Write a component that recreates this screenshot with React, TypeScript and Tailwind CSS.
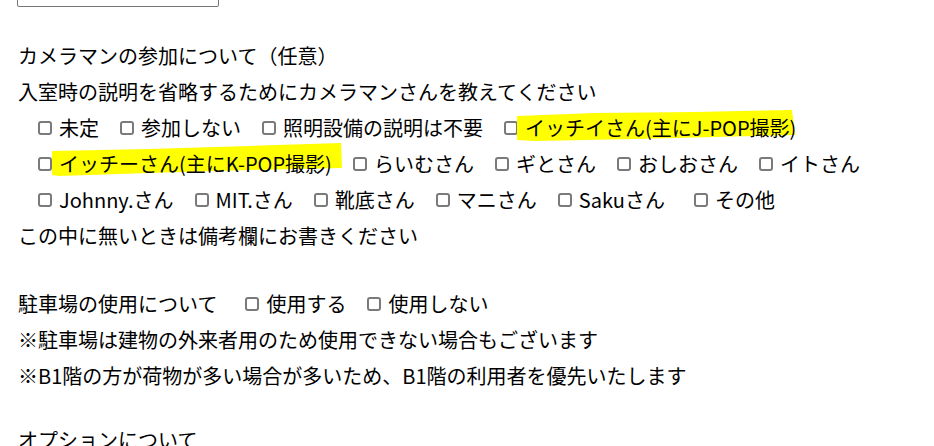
import React from "react";

type Item = { label: string; mark?: "j" | "k"; wide?: boolean };

const rows: Item[][] = [
  [
    { label: "未定" },
    { label: "参加しない" },
    { label: "照明設備の説明は不要" },
    { label: "イッチイさん(主にJ-POP撮影)", mark: "j" },
  ],
  [
    { label: "イッチーさん(主にK-POP撮影)", mark: "k" },
    { label: "らいむさん" },
    { label: "ギとさん" },
    { label: "おしおさん" },
    { label: "イトさん" },
  ],
  [
    { label: "Johnny.さん" },
    { label: "MIT.さん" },
    { label: "靴底さん" },
    { label: "マニさん" },
    { label: "Sakuさん", wide: true },
    { label: "その他" },
  ],
];

const Marker = ({ kind }: { kind: "j" | "k" }) =>
  kind === "j" ? (
    <svg
      className="absolute left-[-8px] top-[-2px] -z-10"
      width="282"
      height="36"
      viewBox="0 0 282 36"
    >
      <polygon
        fill="#ffff00"
        points="0,8 78,5 178,4 275,2 278,27 198,29 118,31 18,33 0,32"
      />
    </svg>
  ) : (
    <svg
      className="absolute left-[-7px] top-[-5px] -z-10"
      width="292"
      height="37"
      viewBox="0 0 292 37"
    >
      <polygon
        fill="#ffff00"
        points="0,10 97,8 197,5 289,2 290,27 197,29 97,32 7,35 0,34"
      />
    </svg>
  );

const Check = ({ label, mark, wide }: Item) => (
  <label className={`inline-flex items-center shrink-0 ${wide ? "mr-[29px]" : "mr-[21px]"}`}>
    <input type="checkbox" className="sr-only" />
    <span className="block shrink-0 w-[14px] h-[14px] border-2 border-[#7a7a7a] rounded-[3px] bg-white" />
    <span className="relative isolate ml-[7px]">
      {mark && <Marker kind={mark} />}
      {label}
    </span>
  </label>
);

export default function App() {
  return (
    <div className="min-h-screen bg-white overflow-hidden px-[18px] text-[20px] leading-[36px] text-black font-['Noto_Sans_CJK_JP','Noto_Sans',sans-serif]">
      <input
        type="text"
        className="block -ml-px -mt-[23px] w-[202px] h-[30px] border border-[#767676] rounded-[2px]"
      />
      <div className="mt-[31px]">カメラマンの参加について（任意）</div>
      <div>入室時の説明を省略するためにカメラマンさんを教えてください</div>
      {rows.map((row, i) => (
        <div key={i} className="flex pl-[20px] h-[36px]">
          {row.map((item) => (
            <Check key={item.label} {...item} />
          ))}
        </div>
      ))}
      <div>この中に無いときは備考欄にお書きください</div>

      <div className="mt-[32px] flex items-center">
        <span className="mr-[28px]">駐車場の使用について</span>
        <Check label="使用する" />
        <Check label="使用しない" />
      </div>
      <div>※駐車場は建物の外来者用のため使用できない場合もございます</div>
      <div>※B1階の方が荷物が多い場合が多いため、B1階の利用者を優先いたします</div>

      <div className="mt-[28px]">オプションについて</div>
    </div>
  );
}
